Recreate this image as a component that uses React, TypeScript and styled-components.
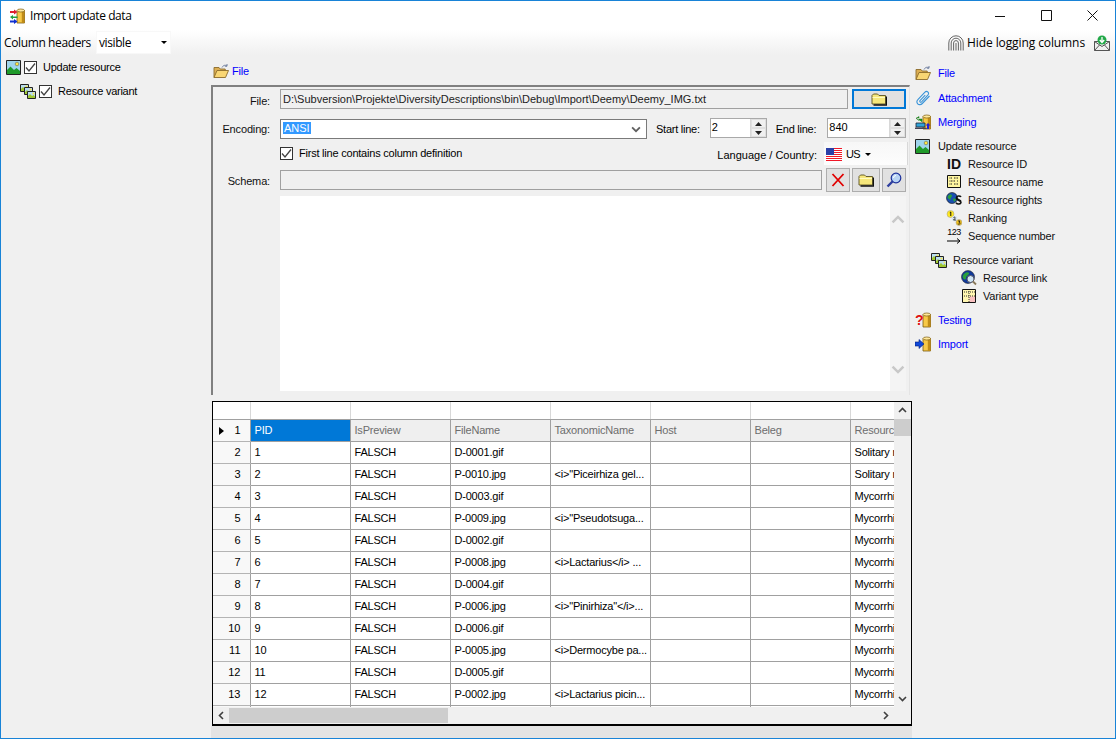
import React from "react";
import styled, { createGlobalStyle } from "styled-components";

const Global = createGlobalStyle`
  html, body { margin: 0; padding: 0; background: #f0f0f0; }
  #root { width: 1116px; height: 739px; overflow: hidden; }
  * { box-sizing: border-box; }
`;

const Win = styled.div`
  width: 1116px; height: 739px; display: flex; flex-direction: column;
  border: 1px solid #1883d7; background: #f0f0f0;
  font: 11px "Liberation Sans", Arial, sans-serif; color: #000; overflow: hidden;
`;
const TitleBar = styled.div`
  height: 29px; flex: none; background: #fff; display: flex; align-items: center; padding-left: 8px;
`;
const TitleText = styled.span`
  font: 12px "Open Sans", "Noto Sans", sans-serif; margin-left: 5px; flex: 1; letter-spacing: -0.43px;
`;
const WinBtn = styled.div`
  width: 46px; height: 29px; display: flex; align-items: center; justify-content: center;
`;
const Toolbar = styled.div`
  height: 25px; flex: none; display: flex; align-items: center; padding-left: 3px; padding-right: 5px;
  background: linear-gradient(#ffffff, #f0f0f0);
  font: 12px "Open Sans", "Noto Sans", sans-serif; letter-spacing: -0.1px;
`;
const ToolLabel = styled.span`letter-spacing: -0.38px;`;
const HeaderSelect = styled.div`
  width: 75px; height: 23px; margin-left: 5px; background: #fff; display: flex; align-items: center;
  justify-content: space-between; padding: 0 3px 0 2px; border: 1px solid #f8f8f8; letter-spacing: -0.38px;
`;
const Caret = styled.i`
  width: 0; height: 0; border: 3px solid transparent; border-top: 3px solid #000; border-bottom: 0; display: block;
`;
const Grow = styled.div`flex: 1;`;
const HideText = styled.span`margin: 0 9px 0 3px;`;
const Body = styled.div`flex: 1; display: flex; min-height: 0;`;
const LeftPane = styled.div`width: 210px; flex: none; padding: 0 0 0 5px; letter-spacing: -0.25px;`;
const TreeRow = styled.div<{ $indent?: number }>`
  height: 24px; display: flex; align-items: center; padding-left: ${(p) => p.$indent ?? 0}px;
`;
const Check = styled.span<{ $ml?: number }>`
  width: 13px; height: 13px; border: 1px solid #333; background: #fff; display: flex; align-items: center;
  justify-content: center; flex: none; margin-left: ${(p) => p.$ml ?? 3}px; margin-right: 6px;
`;
const Center = styled.div`width: 701px; flex: none; display: flex; flex-direction: column;`;
const SectionHead = styled.div`
  height: 30px; flex: none; display: flex; align-items: center; padding-left: 2px; padding-top: 2px; gap: 3px; color: #0000ff;
  letter-spacing: -0.2px;
`;
const FilePanel = styled.div`
  height: 310px; flex: none; margin-right: 2px; border-top: 2px solid #808080; border-left: 2px solid #808080;
  border-right: 1px solid #e4e4e4; padding-top: 2px;
`;
const FormRow = styled.div<{ $h: number; $mt?: number }>`
  height: ${(p) => p.$h}px; margin-top: ${(p) => p.$mt ?? 0}px; display: flex; align-items: center;
`;
const Label = styled.label<{ $dy?: number }>`
  width: 57px; text-align: right; flex: none; margin-right: 10px; white-space: nowrap; color: #111;
  letter-spacing: -0.15px; padding-top: ${(p) => (p.$dy ?? 0) * 2}px;
`;
const ReadOnly = styled.div<{ $w: number }>`
  width: ${(p) => p.$w}px; height: 20px; border: 1px solid #a0a0a0; background: #f0f0f0; padding: 2px 2px;
  flex: none; white-space: nowrap; line-height: 14px; color: #222;
`;
const PrimaryBtn = styled.div`
  width: 54px; height: 20px; margin-left: 4px; border: 2px solid #0078d7; background: #e1e1e1; display: flex;
  align-items: center; justify-content: center;
`;
const Combo = styled.div`
  width: 367px; height: 20px; flex: none; background: #fff; border: 1px solid #7a7a7a; display: flex;
  align-items: center; justify-content: space-between; padding: 0 5px 0 2px;
`;
const Selected = styled.span`
  background: #3399ff; color: #fff; height: 12px; line-height: 12px; padding: 0 1px; margin-bottom: 3px; font-size: 11px;
`;
const InlineLabel = styled.span<{ $ml: number; $mr: number }>`
  margin-left: ${(p) => p.$ml}px; margin-right: ${(p) => p.$mr}px; white-space: nowrap; flex: none; letter-spacing: -0.25px;
`;
const Spin = styled.div<{ $w: number }>`
  width: ${(p) => p.$w}px; height: 20px; flex: none; background: #fff; border: 1px solid #a9a9a9; display: flex;
  justify-content: space-between; margin-bottom: 2px;
`;
const SpinText = styled.span`padding: 2px 1px; line-height: 13px; font-size: 11px;`;
const SpinArrows = styled.div`
  width: 16px; display: flex; flex-direction: column; background: #f0f0f0; border-left: 1px solid #d8d8d8;
`;
const SpinArrow = styled.div`
  flex: 1; display: flex; align-items: center; justify-content: center; border: 1px solid #e0e0e0;
`;
const CheckLabel = styled.div`
  display: flex; align-items: center; margin-left: 64px; width: 433px; flex: none; letter-spacing: -0.22px; padding-bottom: 1px;
`;
const LangLabel = styled.span`width: 107px; text-align: right; white-space: nowrap; flex: none; padding-top: 2px;`;
const LangStrip = styled.div`
  width: 84px; height: 23px; margin-left: 7px; display: flex; align-items: center; padding: 1px 0 0 2px; gap: 4px;
  background: linear-gradient(#f7f7f7, #fdfdfd); border-right: 1px solid #d8d8d8; font-size: 11px; letter-spacing: -0.6px; flex: none;
`;
const SmallCaret = styled(Caret)`margin-left: 1px;`;
const IconBtn = styled.div<{ $w: number; $ml: number }>`
  width: ${(p) => p.$w}px; height: 24px; margin-left: ${(p) => p.$ml}px; border: 1px solid #adadad;
  background: #e1e1e1; display: flex; align-items: center; justify-content: center; flex: none;
`;
const SchemaArea = styled.div`
  margin-left: 67px; margin-top: 4px; width: 626px; height: 195px; display: flex; background: #fff;
`;
const SchemaText = styled.div`flex: 1; background: #fff;`;
const SchemaScroll = styled.div`
  width: 16px; background: #f4f4f4; display: flex; flex-direction: column; justify-content: space-between;
  align-items: center; padding: 17px 0 15px;
`;
const GridFrame = styled.div`
  margin: 6px 0 0 1px; height: 325px; width: 700px; flex: none; border: 1px solid #000; border-width: 1px 1px 2px 1px;
  background: #fff; display: flex; flex-direction: column; overflow: hidden;
`;
const GridMain = styled.div`flex: 1; display: flex; min-height: 0;`;
const GridView = styled.div`width: 681px; flex: none; overflow: hidden;`;
const Table = styled.table`
  border-collapse: collapse; table-layout: fixed; width: 737px; letter-spacing: -0.2px;
  td { padding: 0 0 0 4px; white-space: nowrap; overflow: hidden; }
`;
const BlankRow = styled.tr`height: 17px; td { border-right: 1px solid #d8d8d8; border-bottom: 1px solid #a0a0a0; }`;
const Tr = styled.tr`height: 22px;`;
const RowHead = styled.td`
  position: relative; background: #f8f8f8; border-bottom: 1px solid #b4b4b4; border-right: 1px solid #a0a0a0;
  text-align: right; padding: 0 9px 0 0 !important; letter-spacing: 0;
`;
const Marker = styled.i`
  position: absolute; left: 6px; top: 7px; width: 0; height: 0;
  border: 4px solid transparent; border-left: 5px solid #000; border-right: 0;
`;
const HeadCell = styled.td<{ $on?: boolean }>`
  background: ${(p) => (p.$on ? "#0078d7" : "#efefef")}; color: ${(p) => (p.$on ? "#fff" : "#6d6d6d")};
  border-right: 1px solid #a0a0a0; border-bottom: 1px solid #a0a0a0;
`;
const Cell = styled.td`
  background: #fff; border-right: 1px solid #a0a0a0; border-bottom: 1px solid #a0a0a0; font-size: 11px;
`;
const VScroll = styled.div`
  width: 17px; flex: none; background: #f0f0f0; display: flex; flex-direction: column; align-items: center;
`;
const ScrollBtn = styled.div<{ $w?: number }>`
  height: 17px; width: ${(p) => p.$w ?? 17}px; flex: none; display: flex; align-items: center; justify-content: center;
`;
const VThumb = styled.div`width: 17px; height: 17px; background: #cdcdcd; flex: none;`;
const HScroll = styled.div`
  height: 17px; flex: none; background: #f0f0f0; display: flex; align-items: center;
`;
const HThumb = styled.div`width: 219px; height: 15px; background: #cdcdcd; flex: none;`;
const Corner = styled.div`width: 17px; height: 17px; flex: none; background: #f0f0f0;`;
const BottomBar = styled.div`height: 12px; width: 701px; flex: none; background: #e3e3e3;`;
const RightPane = styled.div`flex: 1; padding: 5px 0 0 3px; letter-spacing: -0.2px;`;
const NavRow = styled.div<{ $indent?: number; $h?: number; $mt?: number; $link?: boolean; $gap?: number }>`
  height: ${(p) => p.$h ?? 18}px; margin-top: ${(p) => p.$mt ?? 0}px; display: flex; align-items: center;
  padding-left: ${(p) => p.$indent ?? 0}px; gap: ${(p) => p.$gap ?? 6}px;
  color: ${(p) => (p.$link ? "#0000ff" : "#111")}; white-space: nowrap;
`;
const IdGlyph = styled.span`
  font: bold 14px "Liberation Sans", sans-serif; width: 16px; text-align: center; color: #111; line-height: 16px; letter-spacing: 0;
`;
const SeqGlyph = styled.span`
  width: 16px; height: 16px; position: relative; display: block; font: 9px "Liberation Sans", sans-serif;
  line-height: 9px; letter-spacing: -0.5px; text-align: center; color: #000;
`;
const SeqArrow = styled.svg`position: absolute; left: 1px; bottom: 0;`;

const Db = ({ x = 8 }: { x?: number }) => (
  <g>
    <path d={`M${x} 2.500h7.500v12.500h-7.500z`} fill="#f7c948" stroke="#7a5a10" strokeWidth=".8" />
    <path d={`M${x + 4.800} 2.500h2.700v12.500h-2.700z`} fill="#c08c18" />
    <ellipse cx={x + 3.750} cy="2.500" rx="3.750" ry="1.500" fill="#ffe89a" stroke="#7a5a10" strokeWidth=".7" />
  </g>
);
const Ico = ({ children, w = 16, h = 16 }: { children: React.ReactNode; w?: number; h?: number }) => (
  <svg width={w} height={h} viewBox={`0 0 ${w} ${h}`} style={{ flex: "none", display: "block" }}>{children}</svg>
);
const TitleIco = () => (
  <Ico>
    <Db x={8} />
    <path d="M1 3h4V1.500L8.500 4 5 6.500V5H1z" fill="#e02030" />
    <path d="M8.500 8.500H4V7L1 9l3 2.500V10h4.500z" fill="#20a040" />
    <path d="M1 12.500h4V11l3.500 2.500L5 16v-1.500H1z" fill="#1030d0" />
  </Ico>
);
const OpenFolder = () => (
  <Ico>
    <path d="M1 14.500V4.500h5l1.200 1.500h5V8" fill="#dcae52" stroke="#8b6b2a" strokeWidth=".9" />
    <path d="M1 14.500 4 7.500h11.500L12.500 14.500z" fill="#f9d673" stroke="#8b6b2a" strokeWidth=".9" />
    <path d="M9 4.500c1-2 3-3 5-1.500M14 3.200V1M14 3.200h-2.200" fill="none" stroke="#6f7f9f" strokeWidth="1" />
  </Ico>
);
const Folder = () => (
  <Ico>
    <path d="M1 13V4.500L2.500 3h4L8 4.500h6.500V13z" fill="#f6e77c" stroke="#5a5020" strokeWidth=".9" />
    <path d="M1.500 6.500h12.500" stroke="#fffbc0" />
    <path d="M2.500 14h13V5.500" fill="none" stroke="#111" strokeWidth="1.400" />
  </Ico>
);
const Clip = () => (
  <Ico>
    <path d="M14 5.500 6.800 13c-1.500 1.500-3.600 1.400-4.600.3s-1-3 .4-4.500l6.600-7c1-1 2.500-1 3.300-.2s.8 2.100-.2 3.100l-6.200 6.600c-.5.5-1.200.5-1.600.1s-.3-1.100.2-1.600l5-5.200" fill="none" stroke="#3a94d8" strokeWidth="1.100" transform="translate(.5 .5)" />
  </Ico>
);
const MergeIco = () => (
  <Ico>
    <Db x={8} />
    <path d="M1 9h9v4H1z" fill="#2fa3d8" stroke="#223" strokeWidth=".8" />
    <path d="M0 13.500h11l1 1.500H0z" fill="#445" />
    <path d="M1 4h3V2.500L1.200 4.500 4 6.500V5h3v3" fill="#18a018" stroke="#187018" strokeWidth=".5" />
    <path d="M12 15v-3.500h-1.500L13 9l2.500 2.500H14V15z" fill="#2020d8" />
  </Ico>
);
const Picture = () => (
  <Ico w={15} h={15}>
    <path d="M.5.5h14v14H.5z" fill="#9fd4ec" stroke="#222" />
    <path d="M1 14V10l3.500-3.500L8 10l2.500-2L14 11v3z" fill="#1f9a2a" />
    <circle cx="11" cy="4" r="1.800" fill="#ffe640" stroke="#555" strokeWidth=".5" />
  </Ico>
);
const Mini = ({ x, y }: { x: number; y: number }) => (
  <g transform={`translate(${x} ${y})`}>
    <path d="M.5.5h8v7h-8z" fill="#b8dcf0" stroke="#222" />
    <path d="M1 7V5l2-2 2 2 1.500-1L8 5.500V7z" fill="#a0c830" />
    <circle cx="6.500" cy="2.500" r="1" fill="#ffe640" />
  </g>
);
const Stack = () => (
  <Ico>
    <Mini x={0} y={1} />
    <Mini x={4} y={4} />
    <Mini x={7} y={8} />
  </Ico>
);
const NameIco = () => (
  <Ico>
    <path d="M1.500 1.500h13v12h-13z" fill="#fff6a0" stroke="#111" />
    <path d="M3.500 4h3M8 4h4.500M3.500 7h6M11 7h1.500M3.500 10h3M8 10h4.500" stroke="#222" strokeDasharray="1 .5" />
  </Ico>
);
const RightsIco = () => (
  <Ico>
    <circle cx="6" cy="6" r="5.500" fill="#1a4fb0" stroke="#111" strokeWidth=".6" />
    <path d="M3 3c2-1 3 0 3 1S4 6 4.500 7.500 3 7 2 6s0-2 1-3zM7 7c2-1 3 0 3 1l-2 2z" fill="#2aa03a" />
    <path d="M15 5c-.8-1.500-4.500-1.500-4.500.5 0 2.500 4.500 2 4.500 4.500s-3.800 2.500-5 .8M10.500 5.500c-1 2.500 4 3.500 4.500 4.500" fill="none" stroke="#111" strokeWidth="1.500" />
  </Ico>
);
const RankIco = () => (
  <Ico>
    <circle cx="4.500" cy="4" r="3.500" fill="#ffe820" stroke="#999" strokeWidth=".5" />
    <path d="M3.800 2.700l1-.7V6" stroke="#111" fill="none" />
    <circle cx="8.500" cy="8.500" r="2.800" fill="#d8e4f0" />
    <path d="M7.500 7.500c1-1 2.500 0 1 1.500l-1 1h2.500" stroke="#111" fill="none" strokeWidth=".8" />
    <circle cx="13" cy="12.500" r="3" fill="#f0c020" stroke="#999" strokeWidth=".5" />
    <path d="M12 11h2l-1 1.200c1.500 0 1.500 2-.2 2l-1-.3" stroke="#111" fill="none" strokeWidth=".8" />
  </Ico>
);
const LinkIco = () => (
  <Ico>
    <circle cx="7" cy="7" r="6.500" fill="#123a9a" stroke="#111" strokeWidth=".5" />
    <path d="M3 4c2-2 4-2 5-1S5 6 5 8s-2 2-3 0 0-3 1-4z" fill="#2aa03a" />
    <circle cx="9.500" cy="9" r="3.500" fill="#cfe6f5" stroke="#556" />
    <path d="M12 11.500l3 3" stroke="#8a7a5a" strokeWidth="1.800" />
  </Ico>
);
const VariantIco = () => (
  <Ico>
    <path d="M1.500 1.500h13v13h-13z" fill="#fff6b0" stroke="#111" />
    <path d="M8.500 8.500h5.500v5.500h-5.500z" fill="#f8c0c0" />
    <path d="M3 4h11M8 3v11M3 8h11" stroke="#333" strokeDasharray="1 1" />
  </Ico>
);
const TestIco = () => (
  <Ico>
    <Db x={8} />
    <text x="0" y="12.500" fontFamily="Liberation Sans" fontWeight="700" fontSize="14" fill="#e01010">?</text>
  </Ico>
);
const ImportIco = () => (
  <Ico>
    <Db x={8} />
    <path d="M0 6h4V3.500L9 8l-5 4.500V10H0z" fill="#1048d8" stroke="#082078" strokeWidth=".6" />
  </Ico>
);
const Print = () => (
  <Ico>
    <g fill="none" stroke="#5e5e5e" strokeWidth=".95">
      <path d="M.8 15.500V8a7.200 7.200 0 0 1 14.400 0v7.500" />
      <path d="M3.200 15.500V8a4.800 4.800 0 0 1 9.600 0v7.500" />
      <path d="M5.600 15.500V8a2.400 2.400 0 0 1 4.800 0v7.500" />
      <path d="M8 15.500V8" />
    </g>
  </Ico>
);
const Mail = () => (
  <Ico>
    <path d="M.5 6.500h15v9H.5z" fill="#f0f0f0" stroke="#555" />
    <path d="M.5 6.500l7.500 5 7.500-5M.5 15.500l5-5.500M15.500 15.500l-5-5.500" fill="none" stroke="#555" />
    <circle cx="8" cy="5" r="4.500" fill="#22a848" />
    <path d="M8 2v5M5.800 5L8 7.500 10.200 5" stroke="#fff" strokeWidth="1.300" fill="none" />
  </Ico>
);
const Flag = () => (
  <svg width="16" height="13" viewBox="0 0 16 13" style={{ display: "block", flex: "none" }}>
    <path d="M0 0h16v13H0z" fill="#fff" />
    {[0, 2, 4, 6, 8, 10, 12].map((y) => <path key={y} d={`M0 ${y}h16v1H0z`} fill="#f01828" />)}
    <path d="M0 0h8v7H0z" fill="#2a3fa8" />
  </svg>
);
const RedX = () => (
  <Ico><path d="M2.500 2 13.500 14M13.500 2 2.500 14" stroke="#e00000" strokeWidth="1.800" /></Ico>
);
const Lens = () => (
  <Ico>
    <path d="M6.500 9.500l-5 5" stroke="#3040a0" strokeWidth="2.400" />
    <circle cx="10" cy="6" r="4.800" fill="#b8d4f4" stroke="#1c2f9a" strokeWidth="1.200" />
    <path d="M7.500 6a2.500 2.500 0 0 1 2.500-2.500" stroke="#fff" fill="none" />
  </Ico>
);
const Tick = () => (
  <svg width="11" height="11" viewBox="0 0 11 11" style={{ display: "block" }}>
    <path d="M1 5.500 4 9 10 1.500" fill="none" stroke="#444" strokeWidth="1.300" />
  </svg>
);
const Chev = ({ d, c = "#404040", s = 9 }: { d: "u" | "d" | "l" | "r"; c?: string; s?: number }) => {
  const p = { u: "M1 6l3.500-3.500L8 6", d: "M1 3l3.500 3.500L8 3", l: "M6 1 2.500 4.500 6 8", r: "M3 1l3.500 3.500L3 8" }[d];
  return <svg width={s} height={s} viewBox="0 0 9 9" style={{ display: "block" }}><path d={p} fill="none" stroke={c} strokeWidth="1.600" /></svg>;
};
const Tri = ({ up }: { up?: boolean }) => (
  <svg width="7" height="4" viewBox="0 0 7 4" style={{ display: "block" }}>
    <path d={up ? "M0 4 3.500 0 7 4z" : "M0 0h7L3.500 4z"} fill="#222" />
  </svg>
);

const rows: [string, string, string][] = [
  ["D-0001.gif", "", "Solitary m"],
  ["P-0010.jpg", "<i>\"Piceirhiza gel...", "Solitary m"],
  ["D-0003.gif", "", "Mycorrhi"],
  ["P-0009.jpg", "<i>\"Pseudotsuga...", "Mycorrhi"],
  ["D-0002.gif", "", "Mycorrhi"],
  ["P-0008.jpg", "<i>Lactarius</i> ...", "Mycorrhi"],
  ["D-0004.gif", "", "Mycorrhi"],
  ["P-0006.jpg", "<i>\"Pinirhiza\"</i>...", "Mycorrhi"],
  ["D-0006.gif", "", "Mycorrhi"],
  ["P-0005.jpg", "<i>Dermocybe pa...", "Mycorrhi"],
  ["D-0005.gif", "", "Mycorrhi"],
  ["P-0002.jpg", "<i>Lactarius picin...", "Mycorrhi"],
];
const heads = ["IsPreview", "FileName", "TaxonomicName", "Host", "Beleg", "Resource"];

export default function App() {
  return (
    <Win>
      <Global />
      <TitleBar>
        <TitleIco />
        <TitleText>Import update data</TitleText>
        <WinBtn><svg width="10" height="10"><path d="M0 5.500h10" stroke="#111" /></svg></WinBtn>
        <WinBtn><svg width="11" height="11"><path d="M.5.500h10v10H.5z" fill="none" stroke="#111" /></svg></WinBtn>
        <WinBtn><svg width="11" height="11"><path d="M.5.500l10 10M10.500.500l-10 10" stroke="#111" /></svg></WinBtn>
      </TitleBar>
      <Toolbar>
        <ToolLabel>Column headers</ToolLabel>
        <HeaderSelect><span>visible</span><Caret /></HeaderSelect>
        <Grow />
        <Print />
        <HideText>Hide logging columns</HideText>
        <Mail />
      </Toolbar>
      <Body>
        <LeftPane>
          <TreeRow><Picture /><Check><Tick /></Check>Update resource</TreeRow>
          <TreeRow $indent={14}><Stack /><Check><Tick /></Check>Resource variant</TreeRow>
        </LeftPane>
        <Center>
          <SectionHead><OpenFolder />File</SectionHead>
          <FilePanel>
            <FormRow $h={20}>
              <Label $dy={2}>File:</Label>
              <ReadOnly $w={568}>D:\Subversion\Projekte\DiversityDescriptions\bin\Debug\Import\Deemy\Deemy_IMG.txt</ReadOnly>
              <PrimaryBtn><Folder /></PrimaryBtn>
            </FormRow>
            <FormRow $h={20} $mt={10}>
              <Label>Encoding:</Label>
              <Combo><Selected>ANSI</Selected><Chev d="d" c="#606060" s={10} /></Combo>
              <InlineLabel $ml={9} $mr={10}>Start line:</InlineLabel>
              <Spin $w={57}><SpinText>2</SpinText><SpinArrows><SpinArrow><Tri up /></SpinArrow><SpinArrow><Tri /></SpinArrow></SpinArrows></Spin>
              <InlineLabel $ml={9} $mr={11}>End line:</InlineLabel>
              <Spin $w={79}><SpinText>840</SpinText><SpinArrows><SpinArrow><Tri up /></SpinArrow><SpinArrow><Tri /></SpinArrow></SpinArrows></Spin>
            </FormRow>
            <FormRow $h={23} $mt={3}>
              <CheckLabel><Check $ml={3}><Tick /></Check>First line contains column definition</CheckLabel>
              <LangLabel>Language / Country:</LangLabel>
              <LangStrip><Flag />US<SmallCaret /></LangStrip>
            </FormRow>
            <FormRow $h={24} $mt={3}>
              <Label $dy={1}>Schema:</Label>
              <ReadOnly $w={542} />
              <IconBtn $w={24} $ml={4}><RedX /></IconBtn>
              <IconBtn $w={28} $ml={2}><Folder /></IconBtn>
              <IconBtn $w={24} $ml={2}><Lens /></IconBtn>
            </FormRow>
            <SchemaArea>
              <SchemaText />
              <SchemaScroll><Chev d="u" c="#c8c8c8" s={14} /><Chev d="d" c="#c8c8c8" s={14} /></SchemaScroll>
            </SchemaArea>
          </FilePanel>
          <GridFrame>
            <GridMain>
              <GridView>
                <Table>
                  <colgroup>
                    <col style={{ width: 37 }} />
                    {[100, 100, 100, 100, 100, 100, 100].map((w, i) => <col key={i} style={{ width: w }} />)}
                  </colgroup>
                  <tbody>
                    <BlankRow><td /><td /><td /><td /><td /><td /><td /><td /></BlankRow>
                    <Tr>
                      <RowHead><Marker />1</RowHead>
                      <HeadCell $on>PID</HeadCell>
                      {heads.map((h) => <HeadCell key={h}>{h}</HeadCell>)}
                    </Tr>
                    {rows.map((r, i) => (
                      <Tr key={i}>
                        <RowHead>{i + 2}</RowHead>
                        <Cell>{i + 1}</Cell>
                        <Cell>FALSCH</Cell>
                        <Cell>{r[0]}</Cell>
                        <Cell>{r[1]}</Cell>
                        <Cell />
                        <Cell />
                        <Cell>{r[2]}</Cell>
                      </Tr>
                    ))}
                    <Tr><RowHead /><Cell /><Cell /><Cell /><Cell /><Cell /><Cell /><Cell /></Tr>
                  </tbody>
                </Table>
              </GridView>
              <VScroll>
                <ScrollBtn><Chev d="u" /></ScrollBtn>
                <VThumb />
                <Grow />
                <ScrollBtn><Chev d="d" /></ScrollBtn>
              </VScroll>
            </GridMain>
            <HScroll>
              <ScrollBtn $w={16}><Chev d="l" /></ScrollBtn>
              <HThumb />
              <Grow />
              <ScrollBtn><Chev d="r" /></ScrollBtn>
              <Corner />
            </HScroll>
          </GridFrame>
          <BottomBar />
        </Center>
        <RightPane>
          <NavRow $link $h={26} $gap={7}><OpenFolder />File</NavRow>
          <NavRow $link $h={24} $gap={7}><Clip />Attachment</NavRow>
          <NavRow $link $h={24} $gap={7}><MergeIco />Merging</NavRow>
          <NavRow $mt={3} $gap={8}><Picture />Update resource</NavRow>
          <NavRow $indent={31}><IdGlyph>ID</IdGlyph>Resource ID</NavRow>
          <NavRow $indent={31}><NameIco />Resource name</NavRow>
          <NavRow $indent={31}><RightsIco />Resource rights</NavRow>
          <NavRow $indent={31}><RankIco />Ranking</NavRow>
          <NavRow $indent={31}><SeqGlyph>123<SeqArrow width="14" height="6" viewBox="0 0 14 6"><path d="M0 3h13M10 .5 13 3l-3 2.500" fill="none" stroke="#000" /></SeqArrow></SeqGlyph>Sequence number</NavRow>
          <NavRow $indent={16} $mt={6}><Stack />Resource variant</NavRow>
          <NavRow $indent={46}><LinkIco />Resource link</NavRow>
          <NavRow $indent={46}><VariantIco />Variant type</NavRow>
          <NavRow $link $mt={6} $gap={7}><TestIco />Testing</NavRow>
          <NavRow $link $mt={6} $gap={7}><ImportIco />Import</NavRow>
        </RightPane>
      </Body>
    </Win>
  );
}
